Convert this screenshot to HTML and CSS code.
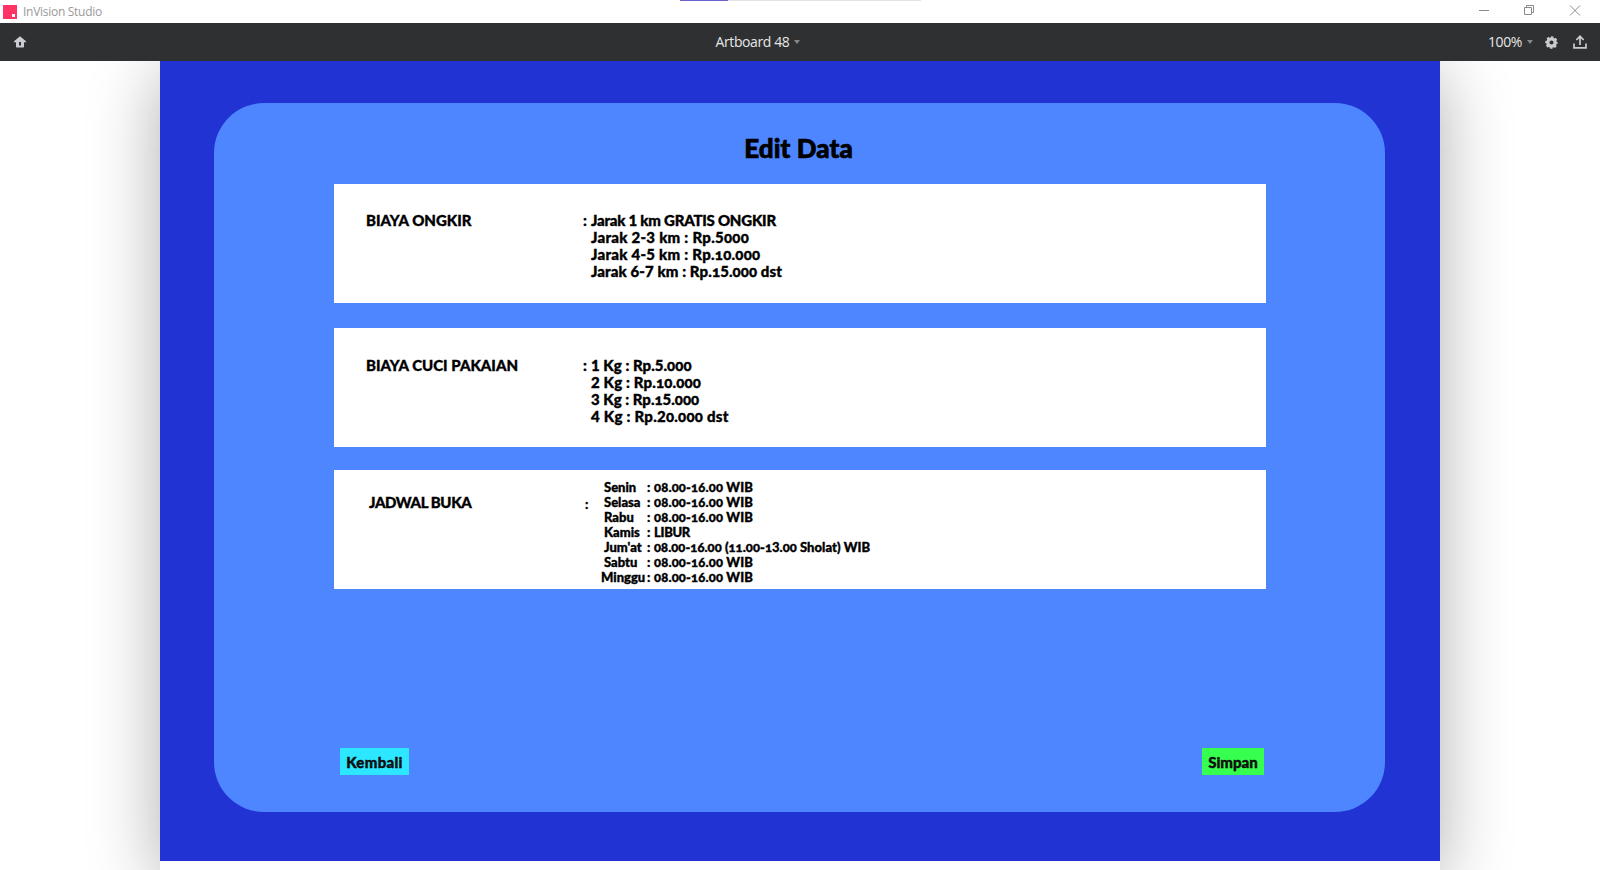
FILE: index.html
```html
<!DOCTYPE html>
<html lang="id">
<head>
<meta charset="utf-8">
<title>InVision Studio</title>
<link rel="stylesheet" href="styles.css">
</head>
<body>
<header class="titlebar">
  <svg class="logo" width="14" height="14" viewBox="0 0 14 14"><path fill="#ff3366" d="M0 0h14v14H0z"/><path fill="#fff" d="M9 9h3v3H9z"/></svg>
  <span class="app-name">InVision Studio</span>
  <div class="progress"><div class="progress-done"></div></div>
  <svg class="window-controls" width="102" height="11" viewBox="0 0 102 11" fill="none" stroke="#8b8b8b">
    <path d="M0 5.500h10M45.500 2.500h7v7h-7zM47.500 2.500v-2h7v7h-2M91 .5l10 10M101 .5l-10 10"/>
  </svg>
</header>
<nav class="toolbar">
  <svg class="home" width="12" height="12" viewBox="0 0 12 12"><path fill="#c9ccd0" fill-rule="evenodd" d="M6 .3 12 5.300v1h-2v4.500q0 .7-.7.7H2.700q-.7 0-.7-.7V6.300H0v-1zM5 6v3.500h2V6z"/></svg>
  <div class="board-name">Artboard 48<i class="caret"></i></div>
  <div class="tools">
    <span class="zoom">100%</span><i class="caret"></i>
    <svg class="gear" width="13" height="13" viewBox="-6.500 -6.500 13 13"><circle r="3.700" fill="none" stroke="#c9ccd0" stroke-width="3.200"/><circle r="5.400" fill="none" stroke="#c9ccd0" stroke-width="1.800" stroke-dasharray="2.400 1.841" stroke-dashoffset="1.200"/></svg>
    <svg class="share" width="14" height="14" viewBox="0 0 14 14" fill="none" stroke="#c9ccd0" stroke-width="1.700"><path d="M1 8.500v4.300h12V8.500M7 10V1.500M3.300 5 7 1.300 10.700 5"/></svg>
  </div>
</nav>
<main class="canvas">
  <div class="artboard">
    <div class="screen">
      <section class="panel">
        <h1 class="heading">Edit Data</h1>
        <div class="cards">
          <article class="card">
            <h2 class="label">BIAYA ONGKIR</h2><span class="colon">:</span>
            <div class="values">
              <p class="v1">Jarak <b>1</b> km GRATIS ONGKIR</p><p class="v2">Jarak <b>2-3</b> km : Rp.<b>5</b>000</p><p class="v3">Jarak <b>4-5</b> km : Rp.10.000</p><p class="v4">Jarak <b>6-7</b> km : Rp.1<b>5</b>.000 dst</p>
            </div>
          </article>
          <article class="card second">
            <h2 class="label">BIAYA CUCI PAKAIAN</h2><span class="colon">:</span>
            <div class="values">
              <p class="k1"><b>1</b> Kg : Rp.<b>5</b>.000</p><p class="k2"><b>2</b> Kg : Rp.10.000</p><p class="k3"><b>3</b> Kg : Rp.1<b>5</b>.000</p><p class="k4"><b>4</b> Kg : Rp.<b>2</b>0.000 dst</p>
            </div>
          </article>
          <article class="card schedule">
            <h2 class="label">JADWAL BUKA</h2><span class="colon">:</span>
            <div class="days">
              <span>Senin</span><span>:</span><span class="t">08.00-16.00 WIB</span>
              <span>Selasa</span><span>:</span><span class="t">08.00-16.00 WIB</span>
              <span>Rabu</span><span>:</span><span class="t">08.00-16.00 WIB</span>
              <span>Kamis</span><span>:</span><span class="libur">LIBUR</span>
              <span>Jum'at</span><span>:</span><span class="long">08.00-16.00 (11.00-1<b>3</b>.00 Sholat) WIB</span>
              <span>Sabtu</span><span>:</span><span class="t">08.00-16.00 WIB</span>
              <span class="minggu">Minggu</span><span>:</span><span class="t">08.00-16.00 WIB</span>
            </div>
          </article>
        </div>
        <div class="actions"><button class="btn back">Kembali</button><button class="btn save">Simpan</button></div>
      </section>
    </div>
  </div>
</main>
</body>
</html>
```
FILE: styles.css
```css
* { box-sizing: border-box; margin: 0; padding: 0; }
body { width: 1600px; height: 870px; overflow: hidden; background: #fff; display: flex; flex-direction: column; font-family: "Open Sans", "Noto Sans", sans-serif; }
.titlebar { position: relative; height: 23px; flex: none; display: flex; align-items: center; padding: 0 20px 0 3px; background: #fff; }
.app-name { margin-left: 6px; font-size: 12px; letter-spacing: -.28px; color: #999; }
.progress { position: absolute; left: 680px; top: 0; width: 241px; height: 1px; background: #e4e4e4; }
.progress-done { width: 48px; height: 1px; background: #6b63d0; }
.window-controls { margin-left: auto; margin-top: -3px; margin-right: -1px; }
.toolbar { height: 38px; flex: none; display: grid; grid-template-columns: 1fr auto 1fr; align-items: center; padding: 0 13px 0 14px; background: #2f3031; color: #e6e7e8; font-size: 14px; font-weight: 500; letter-spacing: -.4px; line-height: 18px; }
.board-name, .tools { display: flex; align-items: center; }
.board-name { padding-right: 85px; margin-top: -1px; }
.tools { justify-content: flex-end; }
.zoom { margin-top: -1px; }
.caret { border: 3.500px solid transparent; border-top: 4px solid #85878a; border-bottom: 0; margin-left: 5px; }
.gear { margin-left: 12px; }
.share { margin-left: 15px; }
.canvas { flex: 1; display: flex; justify-content: center; overflow: hidden; }
.artboard { width: 1280px; height: 809px; flex: none; background: #fff; box-shadow: 0 12px 66px rgba(0,0,0,.32); }
.screen { height: 800px; background: #2233d4; padding: 42px 55px 49px 54px; }
.panel { height: 709px; border-radius: 50px; background: #4d86ff; padding: 29px 119px 37px 120px; display: flex; flex-direction: column; color: #000; font-family: Lato, sans-serif; font-weight: 900; font-feature-settings: "onum"; -webkit-text-stroke: .35px #000; }
.panel b { font-weight: inherit; font-feature-settings: "lnum"; }
.heading { height: 52px; text-align: center; font-size: 26px; line-height: 32px; font-weight: 900; letter-spacing: .1px; padding-right: 3px; -webkit-text-stroke-width: .7px; }
.cards { display: flex; flex-direction: column; gap: 25px; }
.card { height: 119px; background: #fff; padding: 28px 0 0 32px; display: flex; font-size: 15px; line-height: 17px; white-space: nowrap; }
.card.second { padding-top: 29px; }
.label { width: 217px; font-size: 15px; line-height: 17px; font-weight: 900; }
.colon { width: 8px; }
.schedule { margin-top: -2px; padding-top: 10px; padding-left: 35px; }
.schedule .label { width: 216px; padding-top: 14px; letter-spacing: -.4px; }
.schedule .colon { width: 19px; padding-top: 16px; font-size: 13px; }
.v1 { letter-spacing: -.23px; }
.v2 { letter-spacing: .27px; }
.v3 { letter-spacing: .26px; }
.v4 { letter-spacing: .1px; }
.k1 { letter-spacing: .03px; }
.k2 { letter-spacing: .15px; }
.k3 { letter-spacing: 0; }
.k4 { letter-spacing: .25px; }
.t { letter-spacing: .17px; }
.long { letter-spacing: .05px; }
.libur { letter-spacing: -.3px; }
.days { display: grid; grid-template-columns: 43px 7px auto; grid-auto-rows: 15px; font-size: 13px; line-height: 15px; }
.minggu { margin-left: -3px; }
.actions { margin-top: auto; display: flex; justify-content: space-between; padding: 0 2px 0 6px; }
.btn { height: 27px; border: 0; font: inherit; font-size: 15px; line-height: 27px; padding-top: 1px; color: #111; }
.back { width: 69px; background: #2de6ff; letter-spacing: .3px; }
.save { width: 62px; background: #37ff50; }
```
